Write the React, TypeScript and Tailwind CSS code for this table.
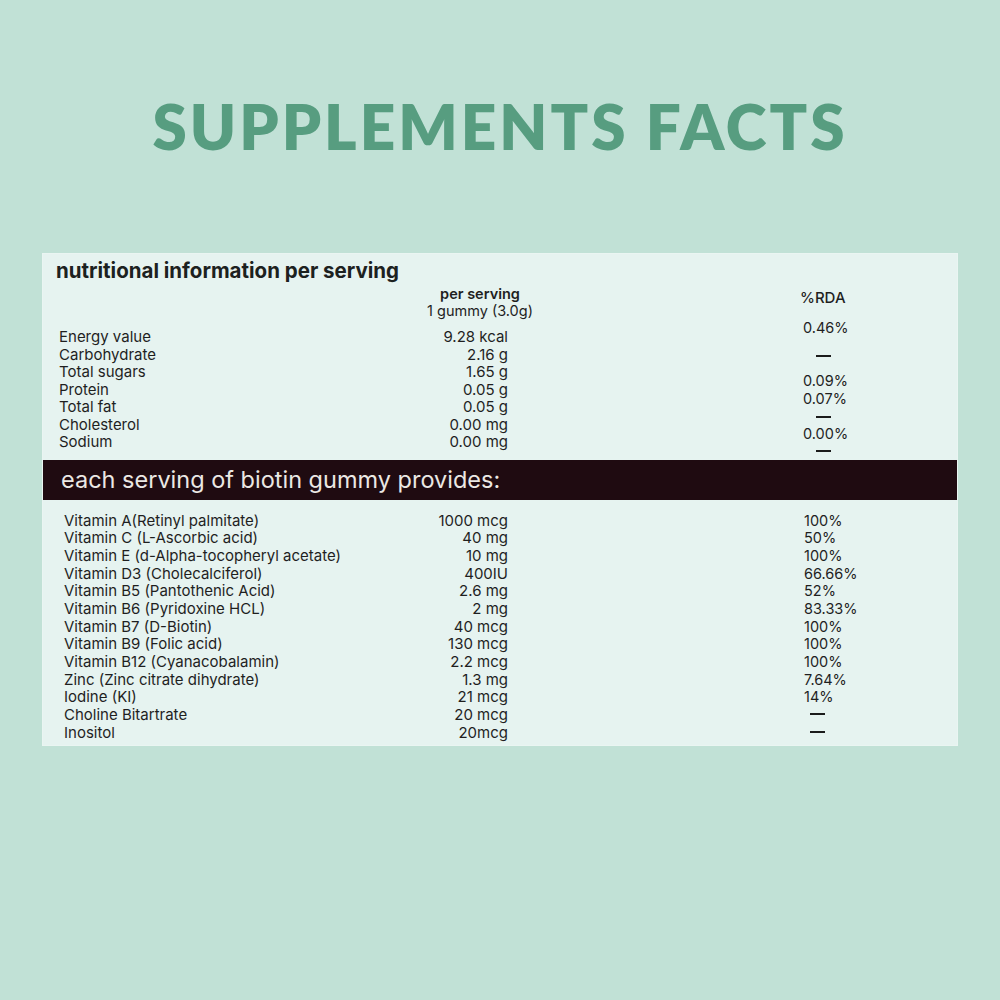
import React from "react";

const nutrition = [
  ["Energy value", "9.28 kcal"],
  ["Carbohydrate", "2.16 g"],
  ["Total sugars", "1.65 g"],
  ["Protein", "0.05 g"],
  ["Total fat", "0.05 g"],
  ["Cholesterol", "0.00 mg"],
  ["Sodium", "0.00 mg"],
];

const vitamins = [
  ["Vitamin A(Retinyl palmitate)", "1000 mcg", "100%"],
  ["Vitamin C (L-Ascorbic acid)", "40 mg", "50%"],
  ["Vitamin E (d-Alpha-tocopheryl acetate)", "10 mg", "100%"],
  ["Vitamin D3 (Cholecalciferol)", "400IU", "66.66%"],
  ["Vitamin B5 (Pantothenic Acid)", "2.6 mg", "52%"],
  ["Vitamin B6 (Pyridoxine HCL)", "2 mg", "83.33%"],
  ["Vitamin B7 (D-Biotin)", "40 mcg", "100%"],
  ["Vitamin B9 (Folic acid)", "130 mcg", "100%"],
  ["Vitamin B12 (Cyanacobalamin)", "2.2 mcg", "100%"],
  ["Zinc (Zinc citrate dihydrate)", "1.3 mg", "7.64%"],
  ["Iodine (KI)", "21 mcg", "14%"],
  ["Choline Bitartrate", "20 mcg", ""],
  ["Inositol", "20mcg", ""],
];

const Dash = ({ className }: { className?: string }) => (
  <div className={`flex h-[17px] items-center ${className || ""}`}>
    <div className="h-[2px] w-[15px] bg-[#1b1b1b]" />
  </div>
);

export default function App() {
  return (
    <div
      className="w-[1000px] h-[1000px] bg-[#c1e1d6] text-[#1f1f1f] overflow-hidden"
      style={{ fontFamily: "Inter, 'Noto Sans', sans-serif" }}
    >
      <h1
        className="pt-[95px] text-center text-[62px] leading-[62px] font-extrabold tracking-[3px] text-[#579d80]"
        style={{ fontFamily: "Lato, sans-serif" }}
      >
        SUPPLEMENTS FACTS
      </h1>

      <div className="mx-[42px] mt-[96px] bg-[#e6f3f0] border border-[#eaf5f2]">
        {/* nutritional information */}
        <div className="pt-[6px] pl-[13px] text-[20.5px] leading-[22px] font-bold text-[#1c2120]">
          nutritional information per serving
        </div>
        <div className="flex">
          <div className="w-[465px] pl-[16px]">
            <div className="ml-[346px] mt-[3px] w-[150px] text-center text-[14.5px] leading-[17px]">
              <div className="font-semibold">per serving</div>
              <div>1 gummy (3.0g)</div>
            </div>
            <div className="mt-[9px] pb-[9px] text-[15px] leading-[17.5px]">
              {nutrition.map(([label, value]) => (
                <div key={label} className="flex justify-between">
                  <span>{label}</span>
                  <span>{value}</span>
                </div>
              ))}
            </div>
          </div>
          <div className="ml-[295px] text-[14.5px] leading-[17px]">
            <div className="mt-[7px] -ml-[3px] text-[15px] font-medium">%RDA</div>
            <div className="mt-[13px]">0.46%</div>
            <Dash className="mt-[11px] ml-[13px]" />
            <div className="mt-[8px]">0.09%</div>
            <div className="mt-[1px]">0.07%</div>
            <Dash className="mt-[1px] ml-[13px]" />
            <div>0.00%</div>
            <Dash className="ml-[13px]" />
          </div>
        </div>

        {/* dark band */}
        <div className="h-[40px] bg-[#1f0b11] pl-[18px] flex items-center text-[23.5px] text-[#ebe8e4]">
          each serving of biotin gummy provides:
        </div>

        {/* vitamins */}
        <div className="pt-[12px] pb-[4px] pl-[21px] text-[15px] leading-[17.67px]">
          {vitamins.map(([label, value, rda]) => (
            <div key={label} className="flex">
              <div className="w-[444px] flex justify-between">
                <span>{label}</span>
                <span>{value}</span>
              </div>
              <div className="ml-[296px] text-[14.5px]">
                {rda ? rda : <Dash className="ml-[6px] h-[17.67px]" />}
              </div>
            </div>
          ))}
        </div>
      </div>
    </div>
  );
}
